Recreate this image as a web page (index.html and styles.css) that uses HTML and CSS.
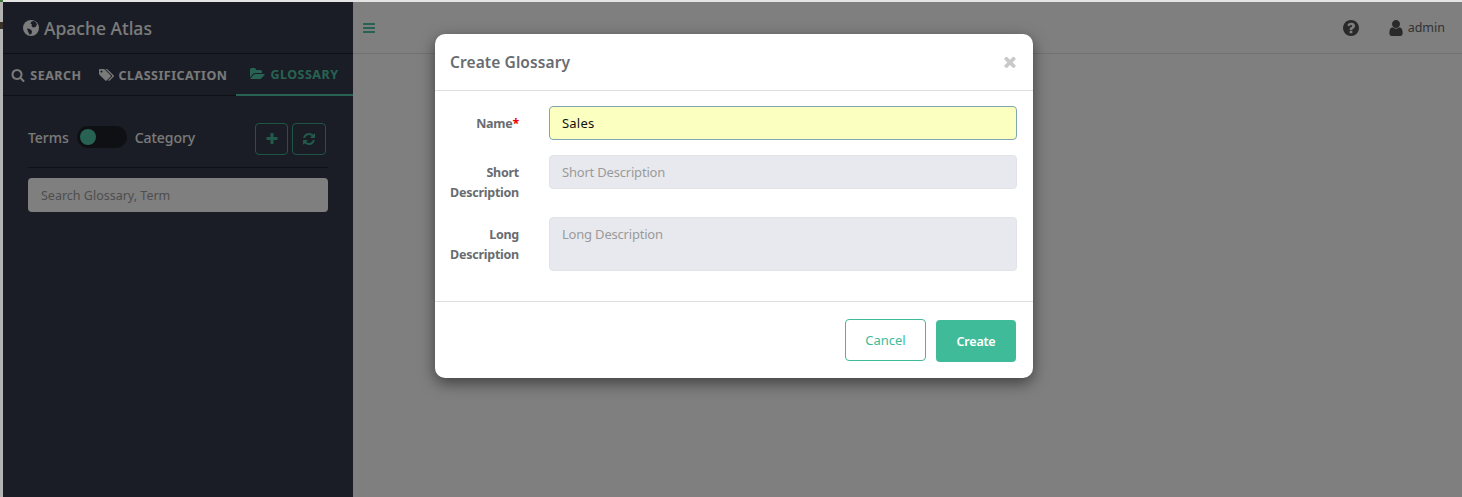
FILE: index.html
```html
<!DOCTYPE html>
<html lang="en">
<head>
<meta charset="utf-8">
<title>Apache Atlas</title>
<link rel="stylesheet" href="styles.css">
</head>
<body>
<div class="frame">
  <div class="app">
    <aside class="sidebar">
      <div class="brand">
        <svg class="globe" viewBox="0 0 16 16"><circle cx="8" cy="8" r="8" fill="currentColor"/><path class="land" d="M8.500 1.500l2.500-.5 2 1.500 1 2-1.500 2.500-2.500.5-1.500-1.500L9 4.500 7.500 3.500zM4 8.500l3 .5 2 2-.5 3-2 .5-1.500-3z"/></svg>
        <span>Apache Atlas</span>
      </div>
      <nav class="tabs">
        <a class="tab tab-search"><svg class="ico" viewBox="0 0 1792 1792"><path d="M1216 832q0-185-131.500-316.500t-316.500-131.500-316.500 131.500-131.500 316.500 131.500 316.500 316.500 131.500 316.500-131.500 131.500-316.500zm512 832q0 52-38 90t-90 38q-54 0-90-38l-343-342q-179 124-399 124-143 0-273.500-55.500t-225-150-150-225-55.500-273.500 55.500-273.500 150-225 225-150 273.500-55.500 273.500 55.500 225 150 150 225 55.500 273.500q0 220-124 399l343 343q37 37 37 90z"/></svg>SEARCH</a>
        <a class="tab tab-class"><svg class="ico ico-wide" viewBox="0 0 1920 1792"><path d="M384 448q0-53-37.500-90.500t-90.500-37.500-90.500 37.500-37.500 90.500 37.500 90.500 90.500 37.500 90.500-37.500 37.500-90.500zm1067 576q0 53-37 90l-491 492q-39 37-91 37-53 0-90-37l-715-716q-38-37-64.500-101t-26.500-117v-416q0-52 38-90t90-38h416q53 0 117 26.500t102 64.500l715 714q37 39 37 91zm384 0q0 53-37 90l-491 492q-39 37-91 37-36 0-59-15t-53-45l470-470q37-37 37-90 0-52-37-91l-715-714q-38-38-102-64.500t-117-26.500h224q53 0 117 26.500t102 64.500l715 714q37 39 37 91z"/></svg>CLASSIFICATION</a>
        <a class="tab tab-gloss active"><svg class="ico ico-wide" viewBox="0 0 1920 1792"><path d="M1815 952q0 31-31 66l-336 396q-43 51-120.500 86.500t-143.500 35.500h-1088q-34 0-60.500-13t-26.500-43q0-31 31-66l336-396q43-51 120.500-86.500t143.500-35.500h1088q34 0 60.500 13t26.500 43zm-343-344v160h-832q-94 0-197 47.500t-164 119.500l-337 396-5 6q0-4-.5-12.500t-.5-12.500v-960q0-92 66-158t158-66h320q92 0 158 66t66 158v32h544q92 0 158 66t66 158z"/></svg>GLOSSARY</a>
      </nav>
      <div class="panel">
        <div class="controls">
          <span class="switch-label">Terms</span>
          <span class="switch"><span class="knob"></span></span>
          <span class="switch-label">Category</span>
          <span class="actions">
            <button class="icon-btn plus"><svg viewBox="0 0 1792 1792"><path d="M1600 736v192q0 40-28 68t-68 28h-416v416q0 40-28 68t-68 28h-192q-40 0-68-28t-28-68v-416h-416q-40 0-68-28t-28-68v-192q0-40 28-68t68-28h416v-416q0-40 28-68t68-28h192q40 0 68 28t28 68v416h416q40 0 68 28t28 68z"/></svg></button>
            <button class="icon-btn refresh"><svg viewBox="0 0 1792 1792"><path d="M1639 1056q0 5-1 7-64 268-268 434.500t-478 166.500q-146 0-282.500-55t-243.500-157l-129 129q-19 19-45 19t-45-19-19-45v-448q0-26 19-45t45-19h448q26 0 45 19t19 45-19 45l-137 137q71 66 161 102t187 36q134 0 250-65t186-179q11-17 53-117 8-23 30-23h192q13 0 22.500 9.500t9.500 22.500zm25-800v448q0 26-19 45t-45 19h-448q-26 0-45-19t-19-45 19-45l138-138q-148-137-349-137-134 0-250 65t-186 179q-11 17-53 117-8 23-30 23h-199q-13 0-22.500-9.500t-9.500-22.500v-7q65-268 270-434.500t480-166.500q146 0 284 55.500t245 156.500l130-129q19-19 45-19t45 19 19 45z"/></svg></button>
          </span>
        </div>
        <div class="search-box">Search Glossary, Term</div>
      </div>
    </aside>
    <main class="main">
      <header class="topbar">
        <svg class="bars" viewBox="0 0 1536 1792"><path transform="translate(-128 0)" d="M1664 1344v128q0 26-19 45t-45 19h-1408q-26 0-45-19t-19-45v-128q0-26 19-45t45-19h1408q26 0 45 19t19 45zm0-512v128q0 26-19 45t-45 19h-1408q-26 0-45-19t-19-45v-128q0-26 19-45t45-19h1408q26 0 45 19t19 45zm0-512v128q0 26-19 45t-45 19h-1408q-26 0-45-19t-19-45v-128q0-26 19-45t45-19h1408q26 0 45 19t19 45z"/></svg>
        <span class="top-right">
          <svg class="help" viewBox="128 128 1536 1536"><path d="M1024 1376v-192q0-14-9-23t-23-9h-192q-14 0-23 9t-9 23v192q0 14 9 23t23 9h192q14 0 23-9t9-23zm256-672q0-88-55.500-163t-138.500-116-170-41q-243 0-371 213-15 24 8 42l132 100q7 6 19 6 16 0 25-12 53-68 86-92 34-24 86-24 48 0 85.500 26t37.500 59q0 38-20 61t-68 45q-63 28-115.500 86.500t-52.500 125.500v36q0 14 9 23t23 9h192q14 0 23-9t9-23q0-19 21.500-49.500t54.500-49.500q32-18 49-28.500t46-35 44.500-48 28-60.500 12.500-81zm384 192q0 209-103 385.500t-279.500 279.500-385.500 103-385.500-103-279.500-279.500-103-385.500 103-385.500 279.500-279.500 385.500-103 385.500 103 279.500 279.500 103 385.500z"/></svg>
          <span class="user"><svg viewBox="256 128 1280 1536"><path d="M1536 1399q0 109-62.500 187t-150.500 78h-854q-88 0-150.500-78t-62.500-187q0-85 8.500-160.500t31.500-152 58.500-131 94-89 134.500-34.500q131 128 313 128t313-128q76 0 134.500 34.500t94 89 58.500 131 31.500 152 8.500 160.500zm-256-887q0 159-112.500 271.500t-271.500 112.500-271.500-112.500-112.500-271.500 112.500-271.500 271.500-112.500 271.500 112.500 112.500 271.500z"/></svg>admin</span>
        </span>
      </header>
    </main>
    <div class="backdrop"></div>
    <section class="modal">
      <div class="modal-head">
        <h2>Create Glossary</h2>
        <svg class="close" viewBox="300 300 1200 1240"><path d="M1490 1322q0 40-28 68l-136 136q-28 28-68 28t-68-28l-294-294-294 294q-28 28-68 28t-68-28l-136-136q-28-28-28-68t28-68l294-294-294-294q-28-28-28-68t28-68l136-136q28-28 68-28t68 28l294 294 294-294q28-28 68-28t68 28l136 136q28 28 28 68t-28 68l-294 294 294 294q28 28 28 68z"/></svg>
      </div>
      <form class="modal-body">
        <div class="row">
          <label class="lbl">Name<span class="req">*</span></label>
          <div class="field field-name">Sales</div>
        </div>
        <div class="row">
          <label class="lbl">Short Description</label>
          <div class="field field-off">Short Description</div>
        </div>
        <div class="row">
          <label class="lbl">Long Description</label>
          <div class="field field-off field-long">Long Description</div>
        </div>
      </form>
      <div class="modal-foot">
        <button type="button" class="btn btn-cancel">Cancel</button>
        <button type="button" class="btn btn-create">Create</button>
      </div>
    </section>
  </div>
</div>
</body>
</html>
```
FILE: styles.css
```css
* { box-sizing: border-box; }
html, body { margin: 0; height: 100%; overflow: hidden; }
body {
  font-family: "Noto Sans", "Open Sans", sans-serif;
  font-size: 13px;
  background: #e8e8e8;
}
.frame {
  height: 497px;
  padding: 2px 0 0 3px;
  background:
    linear-gradient(#3c7a3c, #3c7a3c) left top / 3px 2px no-repeat,
    linear-gradient(#3a3128, #3a3128) left 22px / 3px 7px no-repeat,
    linear-gradient(#e4e4e4, #e4e4e4) left top / 100% 2px no-repeat,
    #b3b3b3;
}
.app {
  position: relative;
  display: flex;
  height: 495px;
  background: #fff;
}
.sidebar {
  width: 350px;
  flex: none;
  background: #343b4b;
  color: #fff;
}
.brand {
  height: 52px;
  border-bottom: 1px solid #1d212a;
  padding-left: 20px;
  display: flex;
  align-items: center;
  gap: 5px;
  font-size: 17.500px;
  font-weight: 500;
  color: #f8f8f8;
}
.globe { width: 16px; height: 16px; color: #f8f8f8; }
.land { fill: #343b4b; }
.tabs {
  display: flex;
  height: 42px;
  border-bottom: 1px solid #1d212a;
}
.tab {
  display: flex;
  align-items: center;
  justify-content: center;
  gap: 4px;
  font-size: 12.500px;
  font-weight: 700;
  letter-spacing: 0.5px;
  color: #f4f4f4;
  height: 42px;
}
.tab svg { fill: currentColor; }
.tab-search { width: 87px; gap: 5px; }
.tab-class { width: 146px; }
.tab-gloss { width: 117px; }
.tab.active { color: #4fc5a5; border-bottom: 2px solid #4fc5a5; }
.ico { width: 14px; height: 14px; }
.ico-wide { width: 16px; }
.panel { padding: 0 25px; }
.controls {
  display: flex;
  align-items: center;
  height: 72px;
  padding-top: 15px;
  border-bottom: 1px solid #1d212a;
  font-size: 14px;
  font-weight: 500;
  color: #f4f4f4;
}
.switch {
  width: 50px;
  height: 22px;
  margin: 0 8px 4px;
  padding: 3px;
  border-radius: 11px;
  background: #1f2128;
}
.knob {
  display: block;
  width: 16px;
  height: 16px;
  border-radius: 50%;
  background: #4fc5a5;
}
.switch-label { letter-spacing: -0.05px; margin-bottom: 4px; }
.actions { margin-left: auto; margin-right: 2px; display: flex; gap: 4px; }
.icon-btn {
  display: flex;
  align-items: center;
  justify-content: center;
  height: 32px;
  padding: 0;
  background: transparent;
  border: 1px solid #3fa98c;
  border-radius: 4px;
}
.icon-btn svg { width: 14px; height: 14px; fill: #45b596; }
.plus { width: 33px; }
.refresh { width: 34px; }
.search-box {
  margin-top: 10px;
  height: 34px;
  padding: 0 13px;
  display: flex;
  align-items: center;
  border-radius: 4px;
  background: #fff;
  color: #9c9c9c;
  font-size: 12.500px;
}
.main { flex: 1; }
.topbar {
  height: 52px;
  border-bottom: 1px solid #e4e4e4;
  display: flex;
  align-items: center;
  padding: 0 17px 0 10px;
}
.bars { width: 12px; height: 14px; fill: #4fc5a5; }
.top-right { margin-left: auto; display: flex; align-items: center; gap: 30px; color: #666; }
.help { width: 16px; height: 16px; fill: #555; }
.user { display: flex; align-items: center; gap: 5px; font-size: 12.500px; }
.user svg { width: 14px; height: 16px; fill: #555; }
.backdrop {
  position: absolute;
  inset: 0;
  background: rgba(0, 0, 0, .5);
}
.modal {
  position: absolute;
  left: 432px;
  top: 32px;
  width: 598px;
  height: 344px;
  background: #fff;
  border-radius: 10px;
  box-shadow: 0 5px 15px rgba(0, 0, 0, .5);
}
.modal-head {
  height: 57px;
  border-bottom: 1px solid #e0e0e0;
  display: flex;
  align-items: center;
  justify-content: space-between;
  padding: 0 17px 0 15px;
}
.modal-head h2 {
  margin: 0;
  font-size: 15.500px;
  font-weight: 600;
  letter-spacing: 0.1px;
  color: #686c70;
}
.close { width: 12px; height: 12px; fill: #c9c9c9; }
.modal-body { padding: 15px 16px 15px 15px; }
.row {
  display: flex;
  gap: 30px;
  margin-bottom: 15px;
}
.lbl {
  width: 69px;
  flex: none;
  padding-top: 8px;
  margin-bottom: -1px;
  text-align: right;
  line-height: 20px;
  font-size: 12.500px;
  font-weight: 700;
  letter-spacing: -0.25px;
  color: #686c70;
}
.req { color: #f00000; }
.field {
  flex: 1;
  height: 34px;
  padding: 7px 12px;
  line-height: 18px;
  font-size: 13px;
  letter-spacing: -0.2px;
  border-radius: 4px;
}
.field-name { background: #fbffc0; border: 1px solid #7ea6b3; color: #111; letter-spacing: 0.2px; }
.field-off { background: #e8e9ee; border: 1px solid #e2e3e8; color: #9a9a9a; }
.field-long { height: 54px; }
.modal-foot {
  border-top: 1px solid #e0e0e0;
  padding: 17px 17px 0 0;
  display: flex;
  justify-content: flex-end;
  align-items: flex-start;
  gap: 10px;
}
.btn {
  height: 42px;
  font-family: inherit;
  font-size: 13px;
  border-radius: 4px;
}
.btn-cancel { width: 81px; background: #fff; border: 1px solid #40bb9a; color: #40bb9a; }
.btn-create { width: 80px; margin-top: 1px; background: #40bb9a; border: 0; color: #fff; font-size: 12.500px; font-weight: 600; letter-spacing: -0.2px; }
```
